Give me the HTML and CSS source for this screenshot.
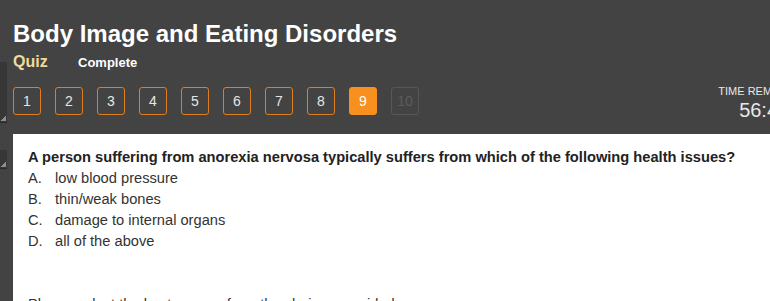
FILE: index.html
```html
<!DOCTYPE html>
<html lang="en">

<head>
    <meta charset="UTF-8">
    <meta name="viewport" content="width=device-width, initial-scale=1.0">
    <link rel="stylesheet" href="styles.css">
    <title>Body Image and Eating Disorders - Quiz</title>
</head>

<body>
    <div class="page">
        <div class="rail">
            <div class="grip tall"></div>
            <div class="grip short"></div>
        </div>

        <div class="main">
            <div class="header">
                <h1 class="title">Body Image and Eating Disorders</h1>
                <div class="subtitle">
                    <span class="quiz-label">Quiz</span>
                    <span class="status">Complete</span>
                </div>
            </div>

            <div class="nav-row">
                <div class="question-nav">
                    <a href="#" class="q-btn">1</a>
                    <a href="#" class="q-btn">2</a>
                    <a href="#" class="q-btn">3</a>
                    <a href="#" class="q-btn">4</a>
                    <a href="#" class="q-btn">5</a>
                    <a href="#" class="q-btn">6</a>
                    <a href="#" class="q-btn">7</a>
                    <a href="#" class="q-btn">8</a>
                    <a href="#" class="q-btn active">9</a>
                    <span class="q-btn disabled">10</span>
                </div>
                <div class="timer">
                    <div class="timer-label">TIME REMAINING</div>
                    <div class="timer-value">56:42</div>
                </div>
            </div>

            <div class="content">
                <p class="question">A person suffering from anorexia nervosa typically suffers from which of the following health issues?</p>
                <ol class="answers">
                    <li><span class="letter">A.</span>low blood pressure</li>
                    <li><span class="letter">B.</span>thin/weak bones</li>
                    <li><span class="letter">C.</span>damage to internal organs</li>
                    <li><span class="letter">D.</span>all of the above</li>
                </ol>
                <p class="hint">Please select the best answer from the choices provided</p>
            </div>
        </div>
    </div>
</body>

</html>
```

FILE: styles.css
```css
/* Global */
body {
    font-family: "Liberation Sans", Arial, sans-serif;
    margin: 0;
    padding: 0;
    background-color: #434343;
    overflow: hidden;
}

.page {
    display: flex;
    align-items: flex-start;
}

/* Left rail with resize grips */
.rail {
    width: 7px;
    flex: none;
    padding-top: 62px;
}

.grip {
    background: linear-gradient(135deg, transparent 50%, #8e8e8e 50%) no-repeat right 1px bottom 1px / 5px 5px, #373737;
    border-bottom: 1px solid #2a2a2a;
}

.grip.tall {
    height: 60px;
    margin-bottom: 27px;
}

.grip.short {
    height: 18px;
}

.main {
    width: 797px;
    flex: none;
    margin-left: 6px;
}

/* Header */
.header {
    padding-top: 20px;
}

.title {
    margin: 0;
    font-size: 24px;
    line-height: 28px;
    font-weight: bold;
    color: #fff;
}

.subtitle {
    margin-top: 4px;
    line-height: 20px;
    display: flex;
    align-items: baseline;
}

.quiz-label {
    font-size: 16px;
    font-weight: bold;
    color: #eedb9c;
    width: 65px;
}

.status {
    font-size: 13px;
    font-weight: bold;
    color: #fff;
}

/* Question buttons + timer */
.nav-row {
    display: flex;
    align-items: flex-start;
    margin-top: 12px;
}

.question-nav {
    display: flex;
    gap: 14px;
    margin-top: 2px;
}

.q-btn {
    width: 26px;
    height: 26px;
    border: 1px solid #df7f1c;
    border-radius: 3px;
    display: flex;
    align-items: center;
    justify-content: center;
    font-size: 14px;
    color: #e6e6e6;
    text-decoration: none;
}

.q-btn.active {
    background-color: #f7901e;
    border-color: #f7901e;
    color: #fff;
}

.q-btn.disabled {
    border-color: #575757;
    color: #5c5c5c;
}

.timer {
    margin-left: auto;
    text-align: center;
    color: #e8e8e8;
}

.timer-label {
    font-size: 11px;
    line-height: 13px;
}

.timer-value {
    font-size: 20px;
    line-height: 24px;
}

/* Question area */
.content {
    background-color: #fff;
    margin-top: 12px;
    padding: 13px 15px 0;
    height: 200px;
    color: #333;
    font-size: 14.67px;
    line-height: 21px;
}

.question {
    margin: 0;
    font-weight: bold;
    color: #222;
}

.answers {
    list-style: none;
    margin: 0;
    padding: 0;
}

.answers li {
    display: flex;
}

.letter {
    width: 27px;
    flex: none;
}

.hint {
    margin: 42px 0 0;
}
```
